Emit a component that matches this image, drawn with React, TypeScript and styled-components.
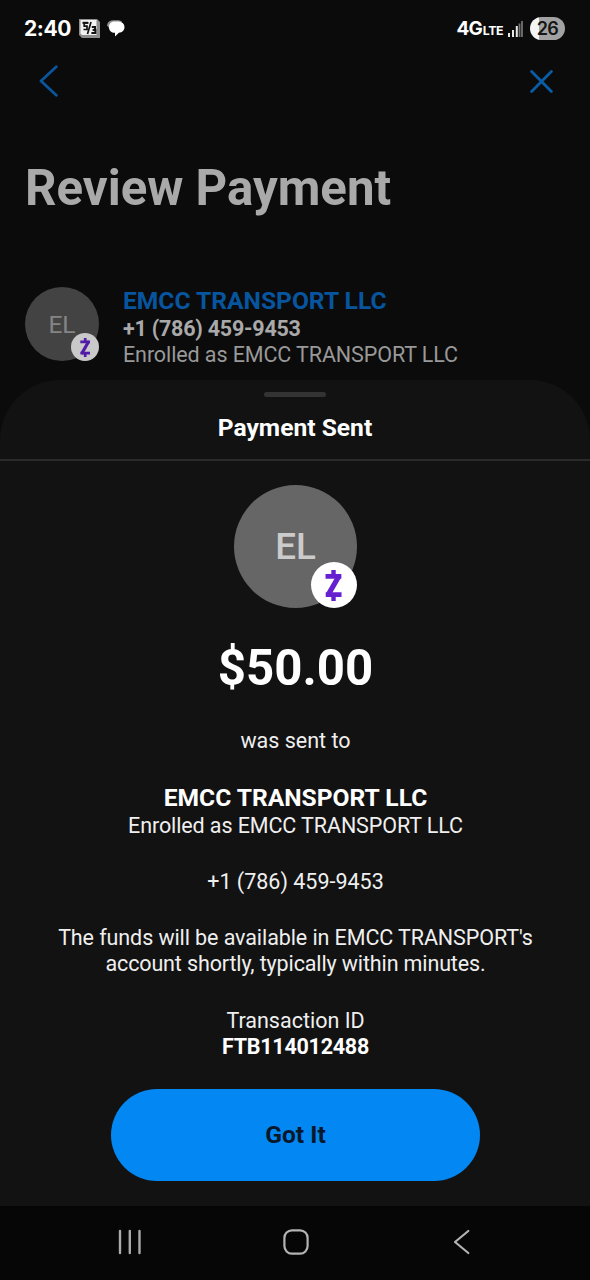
import React from "react";
import styled, { createGlobalStyle } from "styled-components";

const Global = createGlobalStyle`
  * { box-sizing: border-box; }
  body { margin: 0; background: #0b0b0b; font-family: Roboto, "Liberation Sans", sans-serif; }
`;

const Screen = styled.div`
  width: 590px;
  height: 1280px;
  display: flex;
  flex-direction: column;
  overflow: hidden;
  background: #0b0b0b;
`;

const StatusBar = styled.header`
  height: 57px;
  padding: 0 25px 0 24px;
  display: flex;
  align-items: center;
  justify-content: space-between;
  color: #fff;
`;

const StatusGroup = styled.div<{ $gap: number }>`
  display: flex;
  align-items: center;
  gap: ${(p) => p.$gap}px;
`;

const Clock = styled.span`
  width: 47px;
  font: 700 21px/28px Inter, sans-serif;
  letter-spacing: -0.4px;
`;

const Network = styled.span`
  padding-top: 2px;
  font: 700 19px/26px Inter, sans-serif;
  letter-spacing: -0.9px;
  small { font-size: 12.4px; font-weight: 700; letter-spacing: -0.5px; margin-left: 1px; }
`;

const Battery = styled.span`
  width: 35px;
  height: 23px;
  margin-left: 3px;
  border-radius: 12px;
  background: linear-gradient(90deg, #f4f4f4 26%, #a2a2a2 26%);
  color: #161616;
  font: 600 18px/23px Inter, sans-serif;
  letter-spacing: -0.5px;
  text-align: center;
`;

const TopNav = styled.nav`
  height: 48px;
  padding: 0 37px 0 39px;
  display: flex;
  align-items: center;
  justify-content: space-between;
`;

const Title = styled.h1`
  margin: 53px 0 0 25px;
  font-size: 49.2px;
  line-height: 60px;
  font-weight: 700;
  color: #a9a9a9;
`;

const Payee = styled.section`
  height: 162px;
  padding: 69px 25px 0;
  display: flex;
  gap: 24px;
`;

const PayeeDetails = styled.div`
  display: flex;
  flex-direction: column;
`;

const Line = styled.div<{ $size?: number; $weight?: number; $height?: number; $color?: string; $top?: number; $track?: number }>`
  margin-top: ${(p) => p.$top ?? 0}px;
  font-size: ${(p) => p.$size ?? 21.5}px;
  line-height: ${(p) => p.$height ?? 26}px;
  font-weight: ${(p) => p.$weight ?? 400};
  color: ${(p) => p.$color ?? "#efefef"};
  letter-spacing: ${(p) => p.$track ?? 0}px;
  white-space: nowrap;
`;

const Circle = styled.div<{ $size: number; $dim?: boolean }>`
  position: relative;
  flex: none;
  width: ${(p) => p.$size}px;
  height: ${(p) => p.$size}px;
  border-radius: 50%;
  display: flex;
  align-items: center;
  justify-content: center;
  background: ${(p) => (p.$dim ? "#434343" : "#666")};
  color: ${(p) => (p.$dim ? "#858585" : "#cbcbcb")};
  font-size: ${(p) => (p.$dim ? 24.6 : 36.8)}px;
  font-weight: ${(p) => (p.$dim ? 400 : 500)};
`;

const Badge = styled.span<{ $size: number; $dim?: boolean }>`
  position: absolute;
  right: 0;
  bottom: 0;
  width: ${(p) => p.$size}px;
  height: ${(p) => p.$size}px;
  border-radius: 50%;
  display: flex;
  align-items: center;
  justify-content: center;
  background: ${(p) => (p.$dim ? "#c9c9c9" : "#fff")};
  color: ${(p) => (p.$dim ? "#521aa8" : "#6720cf")};
`;

const Sheet = styled.main`
  height: 826px;
  border-radius: 60px 60px 0 0;
  background: #121212;
  display: flex;
  flex-direction: column;
  align-items: center;
`;

const SheetHeader = styled.div`
  width: 100%;
  height: 81px;
  padding-top: 12px;
  border-bottom: 2px solid #2b2b2b;
  display: flex;
  flex-direction: column;
  align-items: center;
`;

const Handle = styled.div`
  width: 62px;
  height: 5px;
  border-radius: 3px;
  background: #333;
`;

const SheetBody = styled.div`
  width: 100%;
  padding: 24px 0 0 1px;
  display: flex;
  flex-direction: column;
  align-items: center;
`;

const Confirm = styled.button`
  width: 369px;
  height: 92px;
  margin-top: 29.4px;
  padding: 0;
  border: 0;
  border-radius: 46px;
  background: #0387f3;
  color: #07182b;
  font: 700 24.6px/30px Roboto, sans-serif;
`;

const SystemNav = styled.footer`
  flex: 1;
  padding: 0 120px 3px 118px;
  background: #060606;
  display: flex;
  align-items: center;
  justify-content: space-between;
`;

const HomeIcon = styled.svg`
  margin-right: 4px;
`;

function ZelleMark({ size }: { size: number }) {
  return (
    <svg width={size * 0.55} height={size} viewBox="0 0 17 31" fill="none" stroke="currentColor">
      <path d="M8.5 0V7M8.5 24V31" strokeWidth="4.4" />
      <path d="M0.5 6.4H16.3M0.7 24.6H16.5" strokeWidth="4.6" />
      <path d="M13.4 7L3.6 24" strokeWidth="5.2" strokeLinecap="round" />
    </svg>
  );
}

function Avatar({ size, dim }: { size: number; dim?: boolean }) {
  const badge = dim ? 28 : 46;
  return (
    <Circle $size={size} $dim={dim}>
      EL
      <Badge $size={badge} $dim={dim}>
        <ZelleMark size={dim ? 19 : 31} />
      </Badge>
    </Circle>
  );
}

function BankIcon() {
  return (
    <svg width="21" height="19" viewBox="0 0 21 19">
      <path d="M0 0H18L21 3V19H3L0 16Z" fill="#8d8d8d" />
      <path d="M1.5 1H17.5V16H3L1.5 14.5Z" fill="#f2f2f2" />
      <path d="M9.5 3.8H5.2V7.2H8V10.5H4.5M12 3L8.5 15" fill="none" stroke="#111" strokeWidth="1.7" />
      <path d="M3.5 3.8H9" stroke="#111" strokeWidth="2" />
      <path d="M12.8 8H16V10.9H13.6H16.4V14H12.4" fill="none" stroke="#111" strokeWidth="2" />
    </svg>
  );
}

function ChatIcon() {
  return (
    <svg width="18" height="17" viewBox="0 0 18 17">
      <path d="M0 5.5C.3 2 3 .2 7 .2h3.5c2 0 3.5.5 4.5 1.5L3 9Z" fill="#929292" />
      <path d="M7.5 1.5h4.2A5.7 5.7 0 0 1 17.5 7c0 3.4-2.3 5.4-5.6 5.8L8 16.6v-3.8C4.2 12.8 2 10.5 2 7.2c0-3.4 2.2-5.7 5.5-5.7Z" fill="#fff" />
    </svg>
  );
}

function SignalIcon() {
  return (
    <svg width="15" height="16" viewBox="0 0 15 16" fill="none" strokeWidth="2">
      <path d="M1 12V16M5 9V16M8.8 5V16" stroke="#e8e8e8" />
      <path d="M11.5 2.5V16M14 0V16" stroke="#727272" strokeWidth="1.8" />
    </svg>
  );
}

export default function App() {
  return (
    <>
      <Global />
      <Screen>
        <StatusBar>
          <StatusGroup $gap={7.5}>
            <Clock>2:40</Clock>
            <BankIcon />
            <ChatIcon />
          </StatusGroup>
          <StatusGroup $gap={4.5}>
            <Network>4G<small>LTE</small></Network>
            <SignalIcon />
            <Battery>26</Battery>
          </StatusGroup>
        </StatusBar>
        <TopNav>
          <svg width="19" height="32" viewBox="0 0 19 32" fill="none" stroke="#09569c" strokeWidth="2.8" strokeLinecap="round" strokeLinejoin="round">
            <path d="M17.3 1.8L2 16L17.3 30.2" />
          </svg>
          <svg width="23" height="23" viewBox="0 0 23 23" fill="none" stroke="#0b5ca6" strokeWidth="2.8" strokeLinecap="round">
            <path d="M1.6 1.6L21.4 21.4M21.4 1.6L1.6 21.4" />
          </svg>
        </TopNav>
        <Title>Review Payment</Title>
        <Payee>
          <Avatar size={74} dim />
          <PayeeDetails>
            <Line $size={24.6} $weight={700} $height={28} $color="#07559f">EMCC TRANSPORT LLC</Line>
            <Line $top={1} $weight={700} $track={-0.23} $color="#a9a9a9">+1 (786) 459-9453</Line>
            <Line $track={-0.1} $color="#999">Enrolled as EMCC TRANSPORT LLC</Line>
          </PayeeDetails>
        </Payee>
        <Sheet>
          <SheetHeader>
            <Handle />
            <Line $size={24.6} $weight={700} $height={30} $top={16} $color="#fff">Payment Sent</Line>
          </SheetHeader>
          <SheetBody>
            <Avatar size={123} />
            <Line $size={49.2} $weight={700} $height={60} $top={30} $color="#fff">$50.00</Line>
            <Line $top={30}>was sent to</Line>
            <Line $size={24.6} $weight={700} $height={28} $top={30} $color="#fff">EMCC TRANSPORT LLC</Line>
            <Line $top={1} $track={-0.1}>Enrolled as EMCC TRANSPORT LLC</Line>
            <Line $top={30}>+1 (786) 459-9453</Line>
            <Line $top={30.3} $track={-0.09}>The funds will be available in EMCC TRANSPORT's</Line>
            <Line $track={-0.13}>account shortly, typically within minutes.</Line>
            <Line $top={30.3}>Transaction ID</Line>
            <Line $weight={700} $track={-0.25} $color="#fff">FTB114012488</Line>
            <Confirm>Got It</Confirm>
          </SheetBody>
        </Sheet>
        <SystemNav>
          <svg width="24" height="26" viewBox="0 0 24 26" fill="none" stroke="#a9a9a9" strokeWidth="2.4" strokeLinecap="round">
            <path d="M2 2V24M11.8 2V24M21.5 2V24" />
          </svg>
          <HomeIcon width="26" height="26" viewBox="0 0 26 26" fill="none" stroke="#b3b3b3" strokeWidth="2.2">
            <rect x="1.4" y="1.4" width="23.2" height="23.2" rx="7.5" />
          </HomeIcon>
          <svg width="17" height="26" viewBox="0 0 17 26" fill="none" stroke="#b3b3b3" strokeWidth="2.2" strokeLinecap="round" strokeLinejoin="round">
            <path d="M15.3 2L2 13L15.3 24" />
          </svg>
        </SystemNav>
      </Screen>
    </>
  );
}
